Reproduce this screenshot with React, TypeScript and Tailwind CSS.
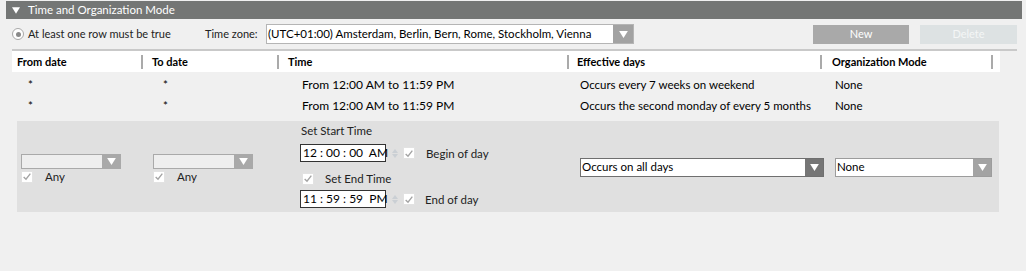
const font = "font-['Segoe_UI','Lato','Open_Sans',sans-serif]";

function Tri({ className = 'w-[9px] h-[7px]' }: { className?: string }) {
    return (
        <svg viewBox="0 0 10 8" className={`shrink-0 ${className}`}>
            <path d="M0 0 H10 L5 8 Z" fill="white" />
        </svg>
    );
}

function Check({ label, gap = 'ml-[12px]' }: { label?: string; gap?: string }) {
    return (
        <div className="flex items-center shrink-0 whitespace-nowrap h-[13px]">
            <div className="shrink-0 w-[12px] h-[12px] bg-white border border-[#e2e2e2] flex items-center justify-center">
                <svg viewBox="0 0 12 12" className="w-[11px] h-[11px]">
                    <path d="M2 6.5 L4.8 9.2 L10 2.5" fill="none" stroke="#a3a3a3" strokeWidth="1.6" />
                </svg>
            </div>
            {label && <span className={`${gap} text-[#222] leading-[13px]`}>{label}</span>}
        </div>
    );
}

function Select({ text, width, boxCls, btnCls, height = 'h-[19px]' }: { text: string; width: string; boxCls: string; btnCls: string; height?: string }) {
    return (
        <div className={`shrink-0 flex ${width} ${height} border ${boxCls}`}>
            <div className="flex-1 min-w-0 flex items-center pl-[1px] text-[11.5px] text-black whitespace-nowrap overflow-hidden">{text}</div>
            <div className={`shrink-0 w-[18px] flex items-center justify-center ${btnCls}`}>
                <Tri />
            </div>
        </div>
    );
}

function TimeBox({ value, ampm }: { value: string; ampm: string }) {
    return (
        <div className="flex items-center shrink-0">
            <div className="w-[86px] h-[18px] border border-[#333] bg-white flex items-center pl-[2px] text-[12px] text-black whitespace-pre">
                {value}  {ampm}
            </div>
            <div className="w-[17px] flex flex-col items-center gap-[1px] opacity-30">
                <svg viewBox="0 0 6 4" className="w-[6px] h-[4px]"><path d="M0 4 L3 0 L6 4Z" fill="#9ab" /></svg>
                <svg viewBox="0 0 6 4" className="w-[6px] h-[4px]"><path d="M0 0 L3 4 L6 0Z" fill="#9ab" /></svg>
            </div>
        </div>
    );
}

const rows = [
    { time: 'From 12:00 AM to 11:59 PM', days: 'Occurs every 7 weeks on weekend', mode: 'None' },
    { time: 'From 12:00 AM to 11:59 PM', days: 'Occurs the second monday of every 5 months', mode: 'None' },
];

export default function App() {
    return (
        <div className={`w-[1026px] h-[271px] bg-[#f0f0f0] ${font} text-[11.5px] text-[#222] pt-px overflow-hidden whitespace-nowrap`}>
            {/* Section header */}
            <div className="ml-[6px] w-[1016px] h-[18px] bg-[#747675] flex items-center pl-[6px] text-white text-[11.5px]">
                <Tri className="w-[8px] h-[7px]" />
                <span className="ml-[8px]">Time and Organization Mode</span>
            </div>

            {/* Toolbar */}
            <div className="h-[30px] flex items-center pl-[12px] text-[11px]">
                <div className="shrink-0 w-[12px] h-[12px] rounded-full border border-[#a8a8a8] bg-white flex items-center justify-center">
                    <div className="w-[5px] h-[5px] rounded-full bg-[#8a8a8a]" />
                </div>
                <span className="ml-[4px] w-[177px] shrink-0">At least one row must be true</span>
                <span className="w-[61px] shrink-0">Time zone:</span>
                <Select
                    text="(UTC+01:00) Amsterdam, Berlin, Bern, Rome, Stockholm, Vienna"
                    width="w-[368px]"
                    boxCls="border-[#b5b5b5] bg-white"
                    btnCls="bg-[#a2a2a2] w-[20px]"
                    height="h-[20px]"
                />
                <button className="shrink-0 ml-[179px] w-[96px] h-[19px] bg-[#a9a9a9] text-white text-[11px]">New</button>
                <button className="shrink-0 ml-[11px] w-[97px] h-[19px] bg-[#dde2e3] text-[#f4f6f6] text-[11px]">Delete</button>
            </div>

            <div className="ml-[12px] w-[1005px] h-[2px] bg-[#c9c9c9]" />

            {/* Column headers */}
            <div className="ml-[12px] w-[988px] h-[21px] bg-white flex items-center font-bold text-[11px] text-black">
                <div className="shrink-0 w-[131px] pl-[5px] border-r-2 border-[#aaa] leading-[14px]">From date</div>
                <div className="shrink-0 w-[136px] pl-[9px] border-r-2 border-[#aaa] leading-[14px]">To date</div>
                <div className="shrink-0 w-[290px] pl-[9px] border-r-2 border-[#aaa] leading-[14px]">Time</div>
                <div className="shrink-0 w-[253px] pl-[8px] border-r-2 border-[#aaa] leading-[14px]">Effective days</div>
                <div className="shrink-0 w-[171px] pl-[10px] border-r-2 border-[#aaa] leading-[14px]">Organization Mode</div>
            </div>

            {/* Rows */}
            <div className="pt-[2px]">
                {rows.map((r, i) => (
                    <div key={i} className="ml-[12px] h-[21px] flex items-center text-black">
                        <div className="shrink-0 w-[131px] pl-[16px]">*</div>
                        <div className="shrink-0 w-[136px] pl-[20px]">*</div>
                        <div className="shrink-0 w-[290px] pl-[23px] text-[12px]">{r.time}</div>
                        <div className="shrink-0 w-[253px] pl-[11px]">{r.days}</div>
                        <div className="shrink-0 w-[171px] pl-[13px]">{r.mode}</div>
                    </div>
                ))}
            </div>

            {/* Edit row */}
            <div className="mt-[5px] ml-[17px] w-[982px] h-[91px] bg-[#e0e0e0] flex items-center">
                <div className="shrink-0 w-[136px] pl-[4px] flex flex-col gap-px mt-[4px]">
                    <Select text="" width="w-[100px]" height="h-[15px]" boxCls="border-[#a9a9a9] bg-[#eeeeee]" btnCls="bg-[#a9a9a9] w-[14px]" />
                    <Check label="Any" />
                </div>
                <div className="shrink-0 w-[147px] flex flex-col gap-px mt-[4px]">
                    <Select text="" width="w-[100px]" height="h-[15px]" boxCls="border-[#a9a9a9] bg-[#eeeeee]" btnCls="bg-[#a9a9a9] w-[14px]" />
                    <Check label="Any" />
                </div>
                <div className="shrink-0 w-[280px] flex flex-col -mt-[2px]">
                    <div className="pl-[1px] h-[15px] leading-[15px]">Set Start Time</div>
                    <div className="flex items-center mt-[6px]">
                        <TimeBox value="12 : 00 : 00" ampm="AM" />
                        <Check label="Begin of day" gap="ml-[11px]" />
                    </div>
                    <div className="pl-[2px] mt-[10px]">
                        <Check label="Set End Time" gap="ml-[11px]" />
                    </div>
                    <div className="flex items-center mt-[5px]">
                        <TimeBox value="11 : 59 : 59" ampm="PM" />
                        <Check label="End of day" gap="ml-[10px]" />
                    </div>
                </div>
                <div className="shrink-0 w-[255px] mt-[1px]">
                    <Select text="Occurs on all days" width="w-[244px]" boxCls="border-[#6f6f6f] bg-white" btnCls="bg-[#757575]" />
                </div>
                <div className="shrink-0 mt-[1px]">
                    <Select text="None" width="w-[157px]" boxCls="border-[#9c9c9c] bg-white" btnCls="bg-[#a3a3a3]" />
                </div>
            </div>
        </div>
    );
}
